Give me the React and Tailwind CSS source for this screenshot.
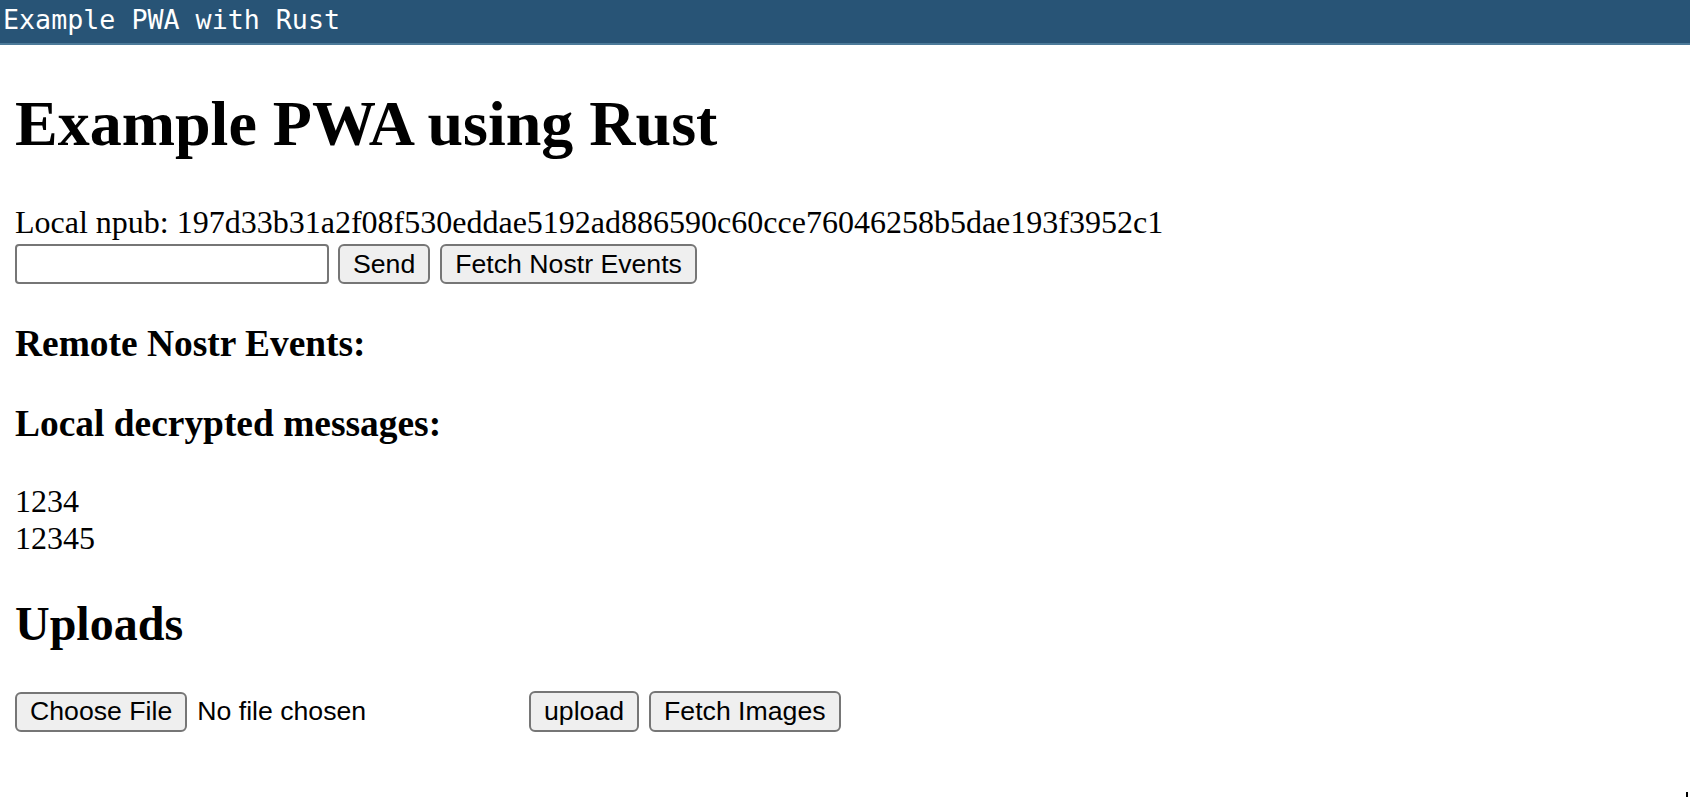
export default function App() {
  const serif = { fontFamily: '"Liberation Serif", "Times New Roman", serif' };
  const btn =
    "h-[40px] shrink-0 rounded-[6px] border-2 border-[#767676] bg-[#efefef] px-[13px] text-[26.67px] leading-[normal] text-black font-['Liberation_Sans',Arial,sans-serif]";
  return (
    <div className="relative min-h-[800px] w-full bg-white leading-[normal] text-black">
      <div className="h-[45px] border-b-2 border-[#4c7a99] bg-[#285476] pl-[3px] pt-[4px] font-['DejaVu_Sans_Mono',monospace] text-[26.67px] leading-[normal] text-white">
        Example PWA with Rust
      </div>
      <div className="pl-[15px]" style={serif}>
        <h1 className="mt-[42px] mb-[43px] text-[64px] font-bold leading-[normal]">
          Example PWA using Rust
        </h1>
        <div className="text-[32px] leading-[normal]">
          Local npub: 197d33b31a2f08f530eddae5192ad886590c60cce76046258b5dae193f3952c1
        </div>
        <div className="mt-[3px] flex items-start">
          <input
            type="text"
            className="h-[40px] w-[314px] shrink-0 rounded-[4px] border-2 border-[#767676] bg-white px-[4px] text-[26.67px] outline-none"
          />
          <button className={btn + " ml-[9px]"}>Send</button>
          <button className={btn + " ml-[10px]"}>Fetch Nostr Events</button>
        </div>
        <h3 className="mt-[37.5px] text-[37.44px] font-bold leading-[normal]">
          Remote Nostr Events:
        </h3>
        <h3 className="mt-[37.5px] text-[37.44px] font-bold leading-[normal]">
          Local decrypted messages:
        </h3>
        <div className="mt-[37.5px] text-[32px] leading-[normal]">
          <div>1234</div>
          <div>12345</div>
        </div>
        <h2 className="mt-[39.8px] text-[48px] font-bold leading-[normal]">Uploads</h2>
        <div className="mt-[39.8px] flex items-center">
          <div className="flex w-[505px] shrink-0 items-center">
            <button className={btn}>Choose File</button>
            <span className="ml-[10px] text-[26.67px] font-['Liberation_Sans',Arial,sans-serif]">
              No file chosen
            </span>
          </div>
          <button className={btn + " ml-[9px] h-[41px]"}>upload</button>
          <button className={btn + " ml-[10px] h-[41px]"}>Fetch Images</button>
        </div>
      </div>
      <span className="absolute bottom-[3px] right-[2px] h-[5px] w-[2px] bg-black" />
    </div>
  );
}
